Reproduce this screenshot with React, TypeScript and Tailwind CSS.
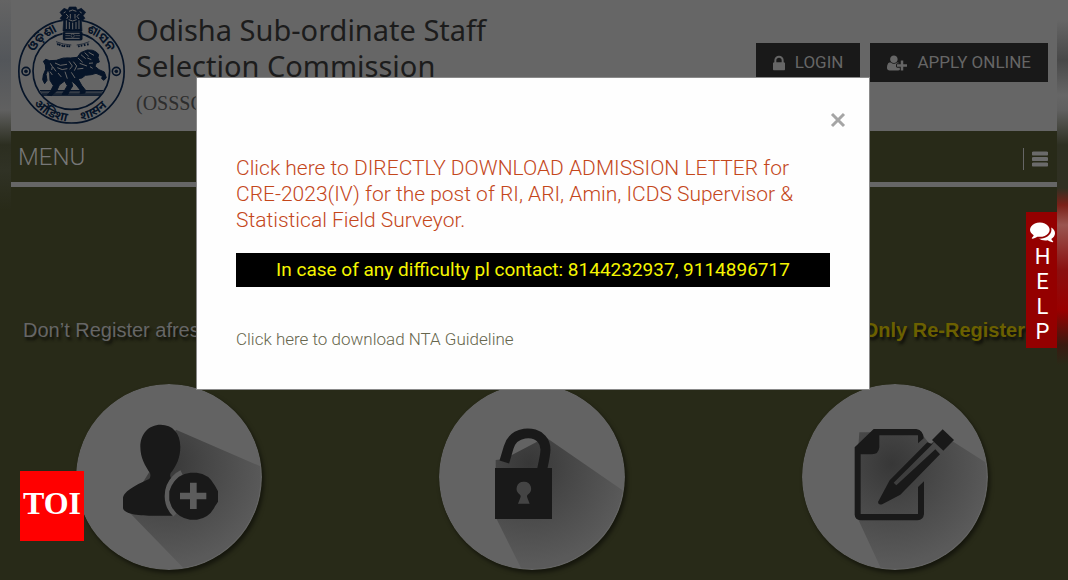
import React, { useState } from 'react';

function Emblem() {
  return (
    <svg viewBox="54 18 324 358" className="w-27 shrink-0 text-[#061428]" fill="none" stroke="currentColor" role="img" aria-label="Government of Odisha">
      <defs>
        <path id="seal-top" d="M89 214A126 126 0 0 1 341 214" />
        <path id="seal-bottom" d="M64 214A150 150 0 0 0 364 214" />
      </defs>
      <ellipse cx="214.500" cy="214" rx="158" ry="155" strokeWidth="5" />
      <circle cx="214" cy="213" r="115" strokeWidth="5" />

      {/* Side medallions */}
      {[78, 349].map(x => (
        <g key={x}>
          <circle cx={x} cy="214" r="12" strokeWidth="5" />
          <circle cx={x} cy="214" r="5" fill="currentColor" />
        </g>
      ))}

      {/* Lion capital */}
      <rect x="188" y="50" width="58" height="72" fill="#666" stroke="none" />
      <path d="M180 37l12-12 12 5 4-9h20l4 9 12-5 13 12-8 10 6 8-11 8 2 30H189l2-30-11-8 7-8Z" fill="currentColor" strokeWidth="2" />
      <path d="M207 34q10-8 22 0M198 42l7 7-5 8M238 42l-7 7 6 8M211 42v14M225 42v14M206 59q12 8 24 0M199 61v26M208 66v21M218 68v20M228 66v21M237 61v26M191 39l6-4M245 39l-6-4" stroke="#666" strokeWidth="3" />
      <rect x="189" y="94" width="58" height="27" rx="5" fill="currentColor" />
      <path d="M196 100h43M196 115h43" stroke="#666" strokeWidth="3" />
      <circle cx="218" cy="107" r="5" stroke="#666" strokeWidth="2" />
      <path d="M196 107h14M226 107h14" stroke="#666" strokeWidth="2" />

      {/* Motto under the capital */}
      <path d="M168 125q22 9 46 10M230 135q20-2 38-10" strokeWidth="2" />
      <path d="M172 130l3 5m5-4l-2 6m8-3l2 6m6-5l-2 6m8-5l3 5m5-5v6m27-6l3 5m7-7l-1 6m9-8l2 6m8-8l1 6" strokeWidth="5" />

      {/* Horse and warrior */}
      <path d="M130 184l7-6 12 4 20-1q20-10 43-7l20-2 10-14 20-8q17-1 25 5l9 8-2 10 4 13-9 3-4 10 12 10 16 7 6 17-7 8-7-5 2-8-19-8-14 4-18 2-10 8-12 2 11 20 11 14-1 9-15 2 2-9-14-18-14-12 4 16-10 15-4 10h-18l8-12 8-14-8-14-16 12-8 18-16 14-12-2 9-10 9-18-10-16-1-20-5-13-6 15 3 18-7 10-6-12 2-14 7-17-1-13Z" fill="currentColor" strokeWidth="3" />
      <path d="M151 190q10 10 4 20M165 189l16 7 20-3M172 203q14 10 30 3M207 184l10 14-8 10M220 185l10 13-7 14M234 174l14 13M243 164l14 12M254 158l12 11M262 174l12 5M266 157l16 9M239 190l22 8M232 207l18-2M174 219l10 12M195 215l7 21M150 215l7 10M214 217l11 17M158 200l10 14M267 190l12-1M270 200l8 5" stroke="#666" strokeWidth="3" />
      <path d="M120 272h190M125 282h178" strokeWidth="4" />
      <path d="M122 276h184M126 286h174" strokeWidth="3" />

      <g fill="currentColor" stroke="none" fontSize="37" fontWeight="bold" fontFamily="'Noto Sans', 'Noto Sans Oriya', 'Noto Sans Devanagari', sans-serif">
        <text textAnchor="middle"><textPath href="#seal-top" startOffset="27%">ଓଡ଼ିଶା</textPath></text>
        <text textAnchor="middle"><textPath href="#seal-top" startOffset="73%">ଶାସନ</textPath></text>
        <text textAnchor="middle"><textPath href="#seal-bottom" startOffset="35%">ओडिशा</textPath></text>
        <text textAnchor="middle"><textPath href="#seal-bottom" startOffset="66%">शासन</textPath></text>
      </g>
    </svg>
  );
}

function LockIcon() {
  return (
    <svg viewBox="320 128 1152 1408" className="h-4 w-3" fill="currentColor" aria-hidden="true">
      <path d="M640 768h512v-192q0-106-75-181t-181-75-181 75-75 181v192zm832 96v576q0 40-28 68t-68 28h-960q-40 0-68-28t-28-68v-576q0-40 28-68t68-28h32v-192q0-184 132-316t316-132 316 132 132 316v192h32q40 0 68 28t28 68z" />
    </svg>
  );
}

function UserPlusIcon() {
  return (
    <svg viewBox="0 0 2048 1792" className="h-5 w-5" fill="currentColor" aria-hidden="true">
      <path d="M704 896q-159 0-271.500-112.500t-112.500-271.500 112.500-271.500 271.500-112.500 271.500 112.500 112.500 271.500-112.500 271.500-271.500 112.500zm960 128h352q13 0 22.500 9.500t9.500 22.500v192q0 13-9.500 22.500t-22.500 9.500h-352v352q0 13-9.500 22.500t-22.500 9.500h-192q-13 0-22.500-9.500t-9.500-22.500v-352h-352q-13 0-22.500-9.500t-9.500-22.500v-192q0-13 9.500-22.500t22.500-9.500h352v-352q0-13 9.500-22.500t22.500-9.500h192q13 0 22.500 9.500t9.500 22.500v352zm-736 224q0 52 38 90t90 38h256v238q-68 50-171 50h-874q-121 0-194-69t-73-190q0-53 3.500-103.500t14-109 26.500-108.500 43-97.500 62-81 85.500-53.500 111.500-20q19 0 39 17 79 61 154.500 91.500t164.500 30.500 164.500-30.500 154.500-91.500q20-17 39-17 132 0 217 96h-223q-52 0-90 38t-38 90v192z" />
    </svg>
  );
}

function CommentsIcon() {
  return (
    <svg viewBox="0 0 1792 1792" className="h-[25px] w-[25px]" fill="currentColor" aria-hidden="true">
      <path d="M1408 768q0 139-94 257t-256.500 186.500-353.500 68.500q-86 0-176-16-124 88-278 128-36 9-86 16h-3q-11 0-20.500-8t-11.500-21q-1-3-1-6.500t.5-6.500 2-6l2.500-5 3.500-5.500 4-5 4.500-5 4-4.500q5-6 23-25t26-29.500 22.500-29 25-38.500 20.500-44q-124-72-195-177t-71-224q0-139 94-257t256.500-186.500 353.500-68.500 353.500 68.500 256.500 186.500 94 257zm384 256q0 120-71 224.500t-195 176.500q10 24 20.500 44t25 38.500 22.500 29 26 29.500 23 25q1 1 4 4.500t4.500 5 4 5 3.500 5.500l2.500 5 2 6 .5 6.500-1 6.500q-3 14-13 22t-22 7q-50-7-86-16-154-40-278-128-90 16-176 16-271 0-472-132 58 4 88 4 161 0 309-45t264-129q125-92 192-212t67-254q0-77-23-152 129 71 204 178t75 230z" />
    </svg>
  );
}

// Round tile with a long shadow cast to the lower right
function Disc({ id, shadow, children }: { id: string; shadow: string; children: React.ReactNode }) {
  return (
    <svg viewBox="0 0 558 558" className="block w-[186px] rounded-full shadow-[2px_3px_4px_rgba(0,0,0,0.5)]" aria-hidden="true">
      <defs>
        <radialGradient id={`${id}-fade`} gradientUnits="userSpaceOnUse" cx="270" cy="240" r="300">
          <stop offset="0" stopColor="#373737" />
          <stop offset="0.4" stopColor="#464646" />
          <stop offset="1" stopColor="#5a5a5a" />
        </radialGradient>
        <clipPath id={`${id}-clip`}>
          <circle cx="279" cy="279" r="275" />
        </clipPath>
      </defs>
      <circle cx="279" cy="279" r="279" fill="#636363" />
      <path d={shadow} fill={`url(#${id}-fade)`} clipPath={`url(#${id}-clip)`} />
      {children}
    </svg>
  );
}

const helpLetters = ['H', 'E', 'L', 'P'];

export default function App() {
  const [showNotice, setShowNotice] = useState(true);

  return (
    <div className="relative flex h-screen overflow-hidden bg-[#282a18] font-[Roboto,sans-serif]">
      <div className="w-[11px] shrink-0 bg-[linear-gradient(#646464,#53565a_60px,#606060_110px,#2c2e20_145px,#303225_170px,#282a18_210px)]" />

      <div className="min-w-0 flex-1">
        {/* Header */}
        <header className="flex h-[131px] items-start justify-between bg-[#666] pr-[9px] pl-[7px]">
          <div className="flex items-start gap-[10px] pt-[6px]">
            <Emblem />
            <div className="pt-[6px] text-[#1c1c1c]">
              <h1 className="font-['Trebuchet_MS','Noto_Sans',sans-serif] text-[29px] leading-[36px]">
                Odisha Sub-ordinate Staff<br />Selection Commission
              </h1>
              <p className="font-['Liberation_Serif',serif] text-xl leading-[38px] text-[#2d2d2d]">(OSSSC)</p>
            </div>
          </div>
          <div className="flex gap-[10px] pt-[43px] text-[17px] text-[#666]">
            <a href="#login" className="flex h-[39px] items-center gap-[10px] bg-[#191919] px-[17px]">
              <LockIcon />
              LOGIN
            </a>
            <a href="#apply" className="flex h-[39px] items-center gap-[10px] bg-[#191919] px-[17px]">
              <UserPlusIcon />
              APPLY ONLINE
            </a>
          </div>
        </header>

        {/* Nav bar */}
        <nav className="flex h-14 items-center justify-between border-b-[5px] border-[#666] pr-[9px] pl-[7px] text-[#777]">
          <span className="text-2xl font-light">MENU</span>
          <button aria-label="Open menu" className="mt-1 flex h-[22px] items-center border-l border-[#666] pl-2">
            <svg viewBox="0 0 16 16" className="h-4 w-4" aria-hidden="true">
              <path d="M1.500 2.500h13M1.500 8h13M1.500 13.500h13" stroke="#6b6b6b" strokeWidth="4" strokeLinecap="round" />
            </svg>
          </button>
        </nav>

        {/* Registration steps */}
        <main>
          <div className="flex justify-between pt-32 pr-8 pl-3 font-['Liberation_Sans',sans-serif] text-xl leading-[30px] [text-shadow:2px_3px_3px_#0c0c08]">
            <p className="text-[#666]">Don’t Register afresh</p>
            <p className="font-bold text-[#6b6000]">Only Re-Register</p>
          </div>
          <div className="flex justify-between pt-[39px] pr-[69px] pl-[65px]">
            <Disc id="register" shadow="M300 137L560 250V560H330L150 375Z">
              <path d="M254 122C218 122 193 150 193 188C193 222 208 246 222 267Q226 280 218 286C189 299 141 321 141 344V371C141 389 184 395 226 395H291C259 359 265 309 286 284Q280 276 284 267C301 246 313 221 313 188C313 147 289 122 254 122Z" fill="#191919" />
              <circle cx="352" cy="336" r="79" fill="none" stroke="#5c5c5c" strokeWidth="14" strokeDasharray="150 400" transform="rotate(134 352 336)" />
              <path d="M343 266h19q36 3 55 39l9 17v31l-9 14q-17 35-54 40h-21q-36-5-55-39l-7-19v-27l7-17q19-35 56-39Z" fill="#191919" />
              <path d="M352 296v79M312 336h79" stroke="#5c5c5c" strokeWidth="20" />
            </Disc>
            <Disc id="login" shadow="M320 160L560 325V560H250L170 400V228L195 225Z">
              <path d="M196 234L209 190C225 139 286 140 308 165C326 185 320 207 309 258" fill="none" stroke="#191919" strokeWidth="30" />
              <rect x="168" y="252" width="171" height="153" fill="#191919" />
              <path d="M254 293a21 21 0 0 0-11 39q4 3 1 9l-7 18h35l-7-18q-3-6 1-9a21 21 0 0 0-12-39Z" fill="#444" />
            </Disc>
            <Disc id="edit" shadow="M172 145H355L383 180L420 158L455 174L560 241V560H240L168 405V200Z">
              <path d="M215 135h128q21 4 22 28l-17 15v-24H232v36q-2 21-22 21h-34v179h172v-81l18-17v98q-2 18-19 19H176q-17-2-18-17V190Z" fill="#191919" />
              <path d="M400 169L389 180L376 175L263 289L228 354Q229 365 242 360L295 332L414 211L400 196L283 304L275 296L388 184Z" fill="#191919" />
              <path d="M422 136l34 32-32 32-34-32Z" fill="#191919" />
            </Disc>
          </div>
        </main>
      </div>

      <div className="w-[11px] shrink-0 bg-[linear-gradient(#666_20px,#484848_60px,#666_95px,#606060_110px,#2e3022_145px,#303022_188px,#7a2018_205px,#9a5550_225px,#8a1010_270px,#900_310px,#3a1a10_345px,#282a18_365px)]" />

      {/* Help tab */}
      <button className="absolute top-[212px] right-[11px] flex h-[136px] w-[31px] flex-col items-center bg-[#940000] pt-[7px] pl-[2px] text-[22px] leading-[25px] text-white">
        <CommentsIcon />
        {helpLetters.map(letter => (
          <span key={letter}>{letter}</span>
        ))}
      </button>

      {/* Notice dialog */}
      {showNotice && (
        <div className="absolute inset-x-0 top-[77px] flex justify-center pr-[198px] pl-[196px]">
          <section role="dialog" aria-label="Notice" className="w-full border border-[#8a8a8a] bg-[#fefefe] px-[39px] pt-[34px] pb-[38px] font-light">
            <div className="-mr-4 flex justify-end">
              <button aria-label="Close" onClick={() => setShowNotice(false)} className="text-[#a5a5a5]">
                <svg viewBox="0 0 16 16" className="h-4 w-4" aria-hidden="true">
                  <path d="M2 2l12 12M14 2L2 14" stroke="currentColor" strokeWidth="3" />
                </svg>
              </button>
            </div>
            <a href="#admission" className="mt-[27px] block text-[21px] leading-[26px] text-[#c4471b]">
              Click here to DIRECTLY DOWNLOAD ADMISSION LETTER for CRE-2023(IV) for the post of RI, ARI, Amin, ICDS Supervisor &amp; Statistical Field Surveyor.
            </a>
            <p className="mt-5 bg-black text-center text-[19px] leading-[34px] font-normal text-[#f5f500]">
              In case of any difficulty pl contact: 8144232937, 9114896717
            </p>
            <a href="#guideline" className="mt-10 block text-[17px] leading-6 text-[#66664d]">Click here to download NTA Guideline</a>
          </section>
        </div>
      )}

      {/* Publisher badge */}
      <div className="absolute bottom-[39px] left-5 flex h-[70px] w-16 items-center justify-center bg-[#f00] pb-[6px] font-['Liberation_Serif',serif] text-[32px] font-bold text-white">
        TOI
      </div>
    </div>
  );
}
